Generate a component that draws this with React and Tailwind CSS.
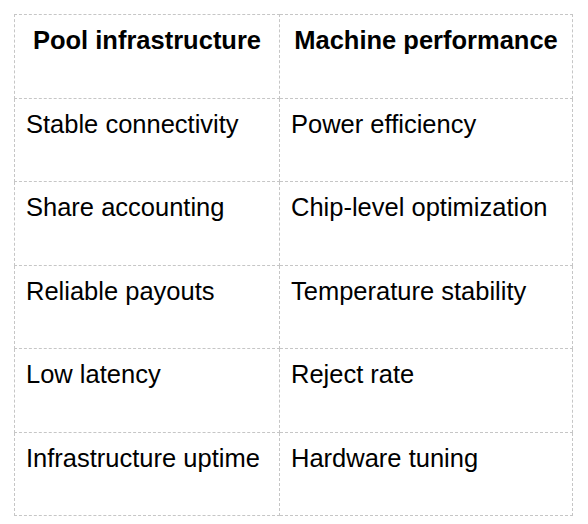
import React from "react";

const rows = [
  ["Stable connectivity", "Power efficiency"],
  ["Share accounting", "Chip-level optimization"],
  ["Reliable payouts", "Temperature stability"],
  ["Low latency", "Reject rate"],
  ["Infrastructure uptime", "Hardware tuning"],
];

const cell =
  "h-[83.5px] border border-dashed border-[#c6c6c6] align-top pt-[6px] px-[11px]";

export default function App() {
  return (
    <div className="w-[588px] h-[524px] bg-white pt-[14px] pl-[14px] font-['Liberation_Sans',Arial,sans-serif] text-[25.5px] text-black">
      <table className="border-collapse table-fixed w-[558px]">
        <colgroup>
          <col className="w-[265px]" />
          <col className="w-[293px]" />
        </colgroup>
        <thead>
          <tr>
            <th className={`${cell} text-center font-bold`}>
              Pool infrastructure
            </th>
            <th className={`${cell} text-center font-bold`}>
              Machine performance
            </th>
          </tr>
        </thead>
        <tbody>
          {rows.map(([left, right]) => (
            <tr key={left}>
              <td className={`${cell} text-left`}>{left}</td>
              <td className={`${cell} text-left`}>{right}</td>
            </tr>
          ))}
        </tbody>
      </table>
    </div>
  );
}
